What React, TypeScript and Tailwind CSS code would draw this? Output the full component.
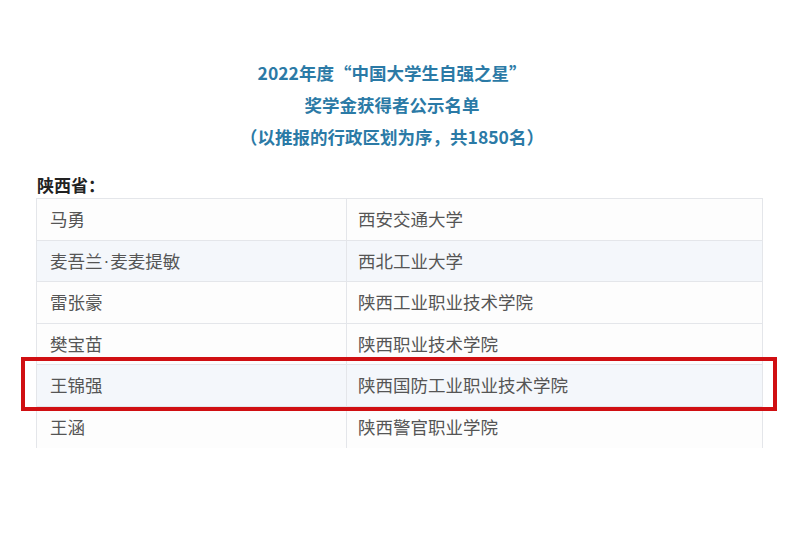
const rows = [
  { name: "马勇", school: "西安交通大学", tint: false },
  { name: "麦吾兰·麦麦提敏", school: "西北工业大学", tint: true },
  { name: "雷张豪", school: "陕西工业职业技术学院", tint: false },
  { name: "樊宝苗", school: "陕西职业技术学院", tint: false },
  { name: "王锦强", school: "陕西国防工业职业技术学院", tint: true, mark: true },
  { name: "王涵", school: "陕西警官职业学院", tint: false, last: true },
];

function Name({ text }: { text: string }) {
  // narrow middle dot like the original page
  const parts = text.split("·");
  if (parts.length === 1) return <>{text}</>;
  return (
    <>
      {parts[0]}
      <span className="px-[1px]" style={{ fontFamily: '"Liberation Sans", sans-serif' }}>·</span>
      {parts[1]}
    </>
  );
}

export default function App() {
  return (
    <div
      className="w-[800px] h-[533px] bg-white overflow-hidden"
      style={{ fontFamily: '"Noto Sans CJK SC", "Liberation Sans", sans-serif' }}
    >
      {/* heading */}
      <div className="pt-[57px] flex flex-col items-center text-[#2b7aa6] font-bold text-[17.5px] leading-[32px] pr-[16px]">
        <div>2022年度“中国大学生自强之星”</div>
        <div>奖学金获得者公示名单</div>
        <div>（以推报的行政区划为序，共1850名）</div>
      </div>

      <div className="pl-[37px] mt-[22px] text-[17px] font-bold text-[#222] leading-[20px]">陕西省：</div>

      {/* table */}
      <div className="ml-[36px] mt-[3px] w-[727px] border-t border-x border-[#e4e6ea]">
        {rows.map((r) => (
          <div
            key={r.name}
            className={`relative flex h-[41.5px] text-[17.5px] text-[#555] ${r.tint ? "bg-[#f4f7fb]" : "bg-[#fdfdfd]"} ${r.last ? "" : "border-b border-[#e4e6ea]"}`}
          >
            <div className="w-[310px] border-r border-[#e4e6ea] pl-[13px] flex items-center">
              <Name text={r.name} />
            </div>
            <div className="flex-1 pl-[11px] flex items-center">{r.school}</div>
            {r.mark && (
              <div className="absolute z-10 left-[-16px] right-[-15px] top-[-8px] bottom-[-5px] border-[4px] border-[#d00f12]" />
            )}
          </div>
        ))}
      </div>
    </div>
  );
}
